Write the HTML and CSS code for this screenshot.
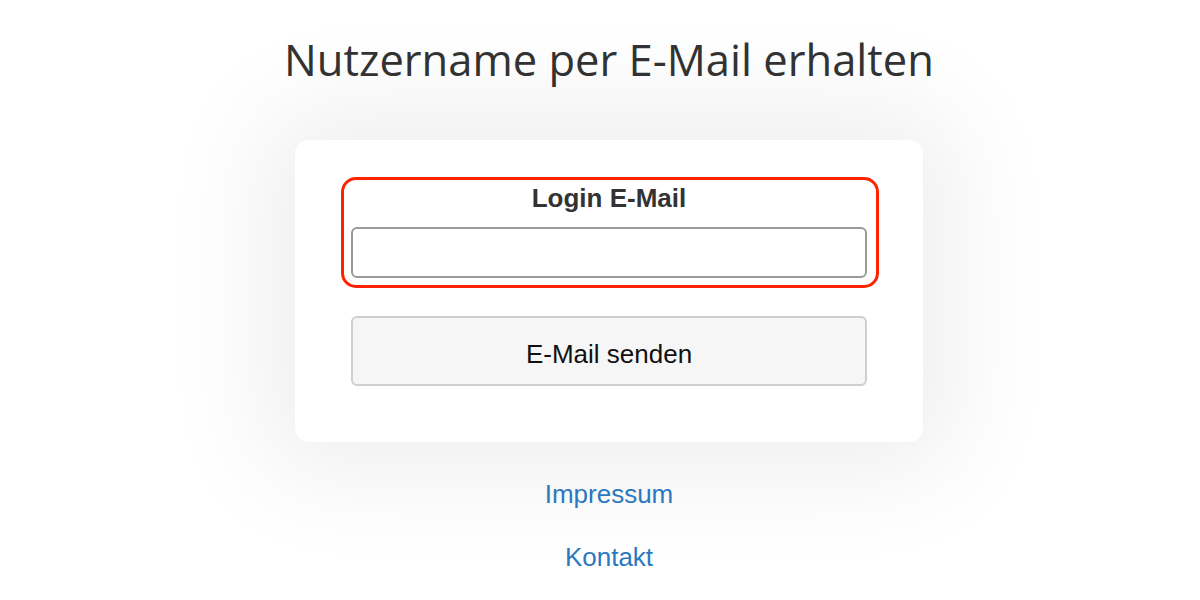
FILE: index.html
```html
<!DOCTYPE html>
<html lang="de">
<head>
  <meta charset="UTF-8" />
  <meta name="viewport" content="width=device-width, initial-scale=1.0"/>
  <title>Nutzername per E-Mail erhalten</title>
  <link rel="stylesheet" href="styles.css">
</head>
<body>

  <h1>Nutzername per E-Mail erhalten</h1>

  <form class="karte" onsubmit="return false;">
    <div class="feld">
      <label for="email">Login E-Mail</label>
      <input type="email" id="email" />
    </div>
    <button type="submit">E-Mail senden</button>
  </form>

  <div class="links">
    <a href="#">Impressum</a>
    <a href="#">Kontakt</a>
  </div>

</body>
</html>
```

FILE: styles.css
```css
body {
  margin: 0;
  padding-left: 18px;
  font-family: "Liberation Sans", Arial, sans-serif;
  background-color: #fff;
  display: flex;
  flex-direction: column;
  align-items: center;
}

h1 {
  font-family: "Open Sans", sans-serif;
  font-weight: 400;
  font-size: 43.5px;
  line-height: 60px;
  color: #333;
  margin: 30px 0 0;
}

.karte {
  box-sizing: border-box;
  width: 628px;
  margin-top: 50px;
  padding: 37px 44px 56px 46px;
  background-color: #fff;
  border-radius: 14px;
  box-shadow: 0 0 110px 30px rgba(0,0,0,0.07);
}

.feld {
  display: flex;
  flex-direction: column;
  border: 3px solid #ff2200;
  border-radius: 15px;
  padding: 1px 9px 7px 7px;
}

.feld label {
  font-weight: bold;
  font-size: 26px;
  line-height: 34px;
  color: #333;
  text-align: center;
  margin-bottom: 12px;
}

input {
  box-sizing: border-box;
  height: 51px;
  border: 2px solid #9a9a9a;
  border-radius: 6px;
  font-size: 22px;
  padding: 0 10px;
}

button {
  box-sizing: border-box;
  display: block;
  width: 516px;
  height: 70px;
  margin: 28px 0 0 10px;
  padding-top: 7px;
  background-color: #f6f6f6;
  border: 2px solid #cfcfcf;
  border-radius: 6px;
  font-family: "Liberation Sans", Arial, sans-serif;
  font-size: 26px;
  color: #111;
  cursor: pointer;
}

.links {
  display: flex;
  flex-direction: column;
  align-items: center;
  gap: 33px;
  margin-top: 37px;
}

.links a {
  font-size: 26px;
  line-height: 30px;
  color: #2b78c0;
  text-decoration: none;
}
```
